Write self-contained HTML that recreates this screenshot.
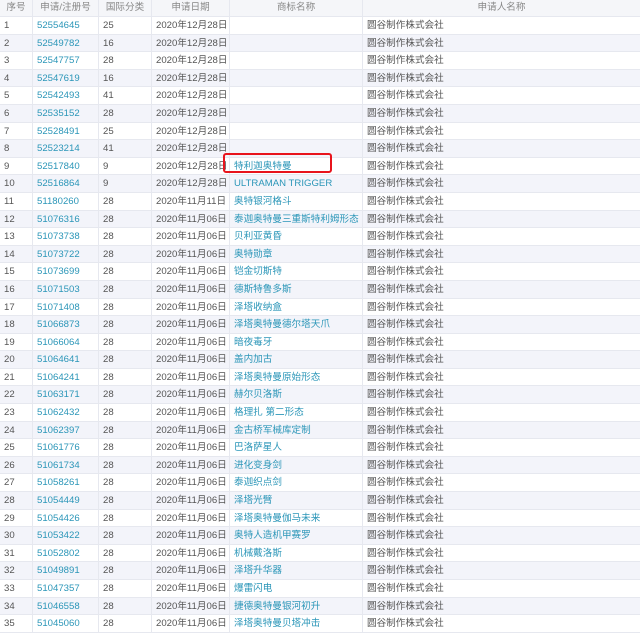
<!DOCTYPE html><html><head><meta charset="utf-8"><style>
*{box-sizing:border-box}
body{margin:0;width:640px;height:633px;overflow:hidden;background:#fff;font-family:"Liberation Sans","Noto Sans CJK SC",sans-serif;font-size:9.6px;color:#555}
.r{display:flex;height:17.6px;border-bottom:1px solid #e6e8ef}
.r>div{border-right:1px solid #e6e8ef;padding-left:4px;line-height:18px;white-space:nowrap;overflow:hidden}
.r>div:nth-child(1){width:33px}.r>div:nth-child(2){width:66px}.r>div:nth-child(3){width:53px}.r>div:nth-child(4){width:78px}.r>div:nth-child(5){width:133px}.r>div:nth-child(6){flex:1;border-right:0}
.h{height:17px;background:#f5f6f9;color:#888}.h>div{text-align:center;padding:0!important;line-height:16px!important}
.r:nth-child(odd):not(.h){background:#f3f4fa}
.r>div:nth-child(2),.r>div:nth-child(5){color:#2b96b8}
.h>div:nth-child(2),.h>div:nth-child(5){color:#888}
.box{position:absolute;left:223px;top:153px;width:109px;height:20px;border:2.5px solid #e8141c;border-radius:3px}
</style></head><body>
<div class="r h"><div>序号</div><div>申请/注册号</div><div>国际分类</div><div>申请日期</div><div>商标名称</div><div>申请人名称</div></div>
<div class="r"><div>1</div><div>52554645</div><div>25</div><div>2020年12月28日</div><div></div><div>圆谷制作株式会社</div></div>
<div class="r"><div>2</div><div>52549782</div><div>16</div><div>2020年12月28日</div><div></div><div>圆谷制作株式会社</div></div>
<div class="r"><div>3</div><div>52547757</div><div>28</div><div>2020年12月28日</div><div></div><div>圆谷制作株式会社</div></div>
<div class="r"><div>4</div><div>52547619</div><div>16</div><div>2020年12月28日</div><div></div><div>圆谷制作株式会社</div></div>
<div class="r"><div>5</div><div>52542493</div><div>41</div><div>2020年12月28日</div><div></div><div>圆谷制作株式会社</div></div>
<div class="r"><div>6</div><div>52535152</div><div>28</div><div>2020年12月28日</div><div></div><div>圆谷制作株式会社</div></div>
<div class="r"><div>7</div><div>52528491</div><div>25</div><div>2020年12月28日</div><div></div><div>圆谷制作株式会社</div></div>
<div class="r"><div>8</div><div>52523214</div><div>41</div><div>2020年12月28日</div><div></div><div>圆谷制作株式会社</div></div>
<div class="r"><div>9</div><div>52517840</div><div>9</div><div>2020年12月28日</div><div>特利迦奥特曼</div><div>圆谷制作株式会社</div></div>
<div class="r"><div>10</div><div>52516864</div><div>9</div><div>2020年12月28日</div><div>ULTRAMAN TRIGGER</div><div>圆谷制作株式会社</div></div>
<div class="r"><div>11</div><div>51180260</div><div>28</div><div>2020年11月11日</div><div>奥特银河格斗</div><div>圆谷制作株式会社</div></div>
<div class="r"><div>12</div><div>51076316</div><div>28</div><div>2020年11月06日</div><div>泰迦奥特曼三重斯特利姆形态</div><div>圆谷制作株式会社</div></div>
<div class="r"><div>13</div><div>51073738</div><div>28</div><div>2020年11月06日</div><div>贝利亚黄昏</div><div>圆谷制作株式会社</div></div>
<div class="r"><div>14</div><div>51073722</div><div>28</div><div>2020年11月06日</div><div>奥特勋章</div><div>圆谷制作株式会社</div></div>
<div class="r"><div>15</div><div>51073699</div><div>28</div><div>2020年11月06日</div><div>铠金切斯特</div><div>圆谷制作株式会社</div></div>
<div class="r"><div>16</div><div>51071503</div><div>28</div><div>2020年11月06日</div><div>德斯特鲁多斯</div><div>圆谷制作株式会社</div></div>
<div class="r"><div>17</div><div>51071408</div><div>28</div><div>2020年11月06日</div><div>泽塔收纳盒</div><div>圆谷制作株式会社</div></div>
<div class="r"><div>18</div><div>51066873</div><div>28</div><div>2020年11月06日</div><div>泽塔奥特曼德尔塔天爪</div><div>圆谷制作株式会社</div></div>
<div class="r"><div>19</div><div>51066064</div><div>28</div><div>2020年11月06日</div><div>暗夜毒牙</div><div>圆谷制作株式会社</div></div>
<div class="r"><div>20</div><div>51064641</div><div>28</div><div>2020年11月06日</div><div>盖内加古</div><div>圆谷制作株式会社</div></div>
<div class="r"><div>21</div><div>51064241</div><div>28</div><div>2020年11月06日</div><div>泽塔奥特曼原始形态</div><div>圆谷制作株式会社</div></div>
<div class="r"><div>22</div><div>51063171</div><div>28</div><div>2020年11月06日</div><div>赫尔贝洛斯</div><div>圆谷制作株式会社</div></div>
<div class="r"><div>23</div><div>51062432</div><div>28</div><div>2020年11月06日</div><div>格理扎 第二形态</div><div>圆谷制作株式会社</div></div>
<div class="r"><div>24</div><div>51062397</div><div>28</div><div>2020年11月06日</div><div>金古桥军械库定制</div><div>圆谷制作株式会社</div></div>
<div class="r"><div>25</div><div>51061776</div><div>28</div><div>2020年11月06日</div><div>巴洛萨星人</div><div>圆谷制作株式会社</div></div>
<div class="r"><div>26</div><div>51061734</div><div>28</div><div>2020年11月06日</div><div>进化变身剑</div><div>圆谷制作株式会社</div></div>
<div class="r"><div>27</div><div>51058261</div><div>28</div><div>2020年11月06日</div><div>泰迦织点剑</div><div>圆谷制作株式会社</div></div>
<div class="r"><div>28</div><div>51054449</div><div>28</div><div>2020年11月06日</div><div>泽塔光臂</div><div>圆谷制作株式会社</div></div>
<div class="r"><div>29</div><div>51054426</div><div>28</div><div>2020年11月06日</div><div>泽塔奥特曼伽马未来</div><div>圆谷制作株式会社</div></div>
<div class="r"><div>30</div><div>51053422</div><div>28</div><div>2020年11月06日</div><div>奥特人造机甲赛罗</div><div>圆谷制作株式会社</div></div>
<div class="r"><div>31</div><div>51052802</div><div>28</div><div>2020年11月06日</div><div>机械戴洛斯</div><div>圆谷制作株式会社</div></div>
<div class="r"><div>32</div><div>51049891</div><div>28</div><div>2020年11月06日</div><div>泽塔升华器</div><div>圆谷制作株式会社</div></div>
<div class="r"><div>33</div><div>51047357</div><div>28</div><div>2020年11月06日</div><div>爆雷闪电</div><div>圆谷制作株式会社</div></div>
<div class="r"><div>34</div><div>51046558</div><div>28</div><div>2020年11月06日</div><div>捷德奥特曼银河初升</div><div>圆谷制作株式会社</div></div>
<div class="r"><div>35</div><div>51045060</div><div>28</div><div>2020年11月06日</div><div>泽塔奥特曼贝塔冲击</div><div>圆谷制作株式会社</div></div>
<div class="box"></div>
</body></html>
